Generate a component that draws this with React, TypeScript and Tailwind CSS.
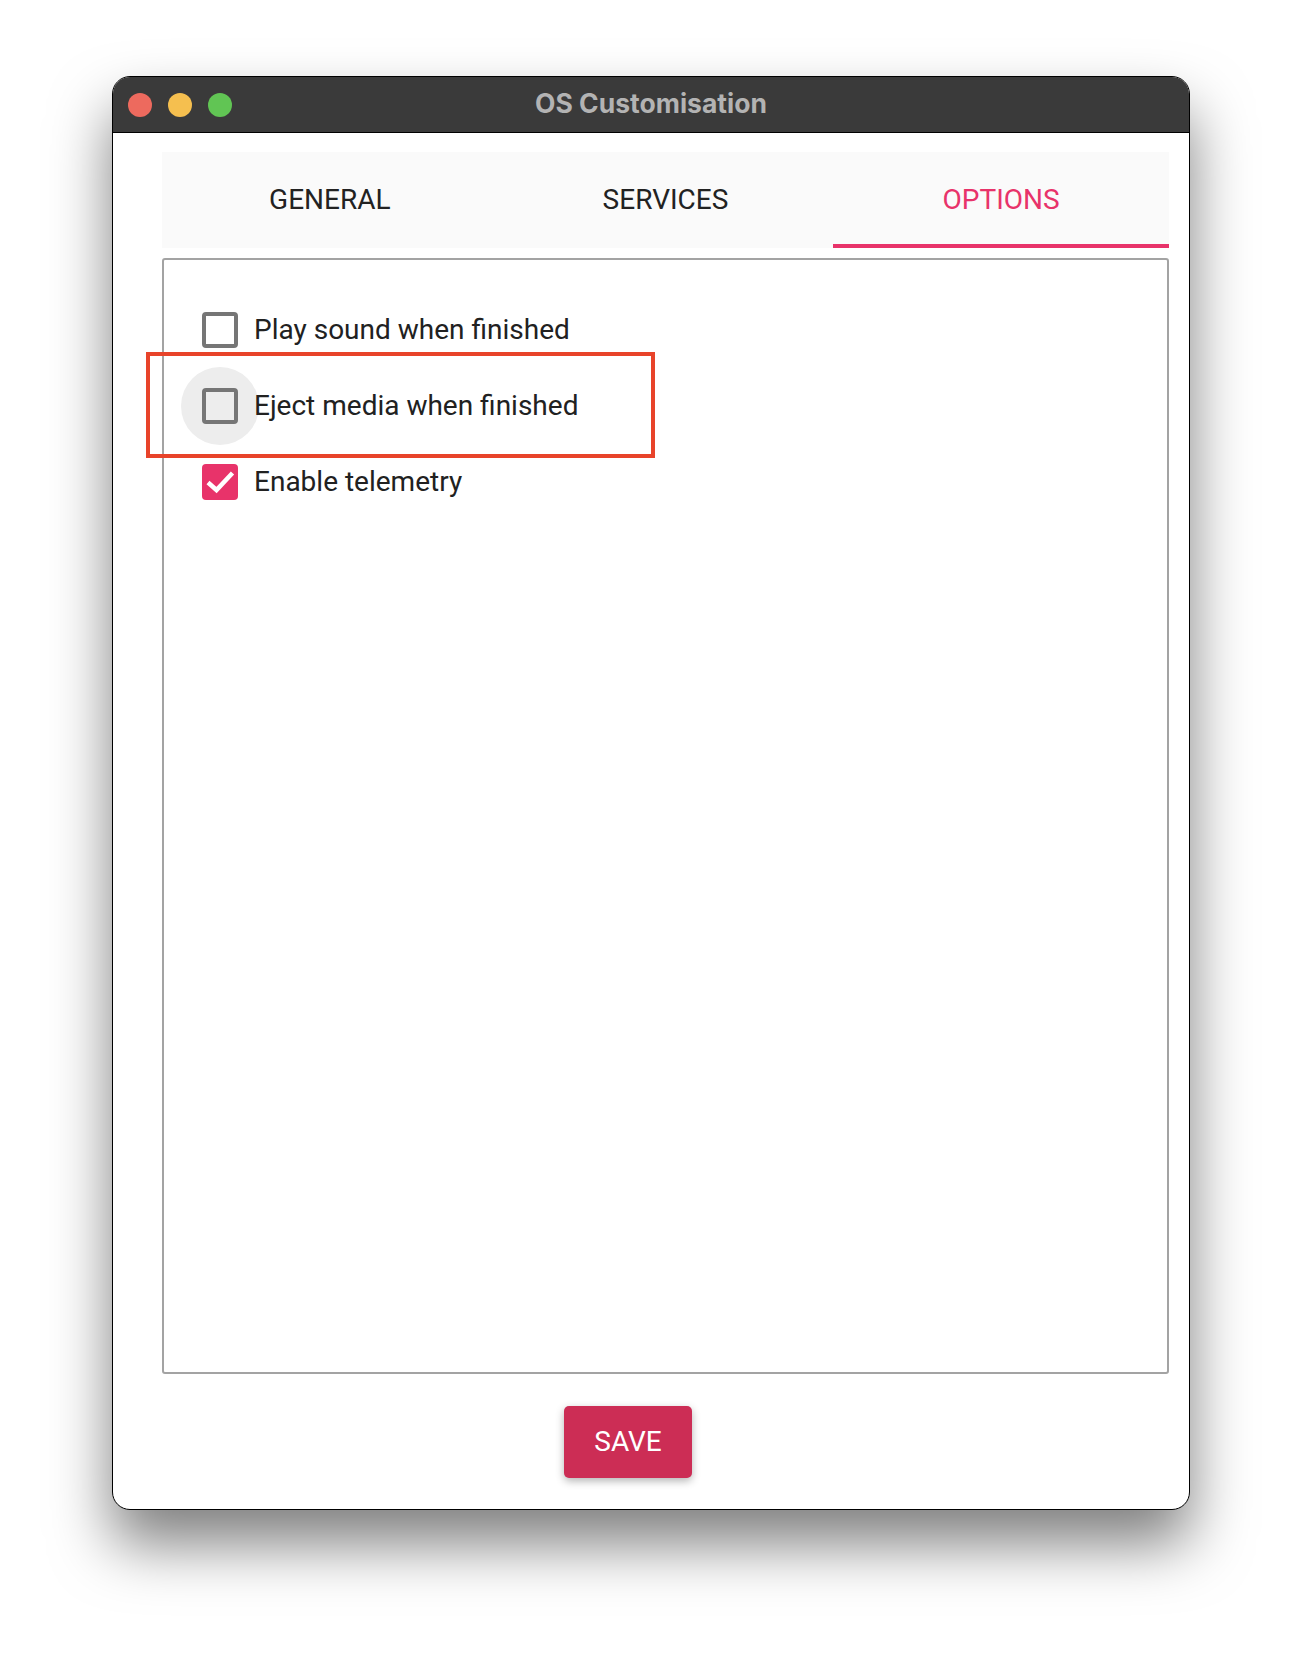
import React from "react";

const tabs = ["GENERAL", "SERVICES", "OPTIONS"];

const options = [
  { label: "Play sound when finished", checked: false, focused: false },
  { label: "Eject media when finished", checked: false, focused: true },
  { label: "Enable telemetry", checked: true, focused: false },
];

const CheckRow = ({ label, checked, focused }: { label: string; checked: boolean; focused: boolean }) => (
  <div className="flex items-center h-[76px] pl-[38px]">
    <div className="relative w-[36px] h-[36px] flex-shrink-0">
      {focused && <div className="absolute -left-[21px] -top-[21px] w-[78px] h-[78px] rounded-full bg-[#ededed]" />}
      {checked ? (
        <div className="relative w-[36px] h-[36px] rounded-[4px] bg-[#e8336a]">
          <svg viewBox="0 0 36 36" className="w-[36px] h-[36px]">
            <path d="M6 18.5 L14.5 26 L30.5 9" fill="none" stroke="white" strokeWidth="4.5" />
          </svg>
        </div>
      ) : (
        <div className="relative w-[36px] h-[36px] rounded-[4px] border-[4px] border-[#767676]" />
      )}
    </div>
    <span className="relative ml-[16px] text-[28px] text-[#212121] font-['Roboto',sans-serif]">{label}</span>
  </div>
);

export default function App() {
  return (
    <div className="relative w-[1302px] h-[1658px] bg-white pt-[76px] pl-[112px] font-['Roboto',sans-serif]">
      <div className="w-[1078px] h-[1434px] rounded-[18px] overflow-hidden border border-black bg-white shadow-[0_34px_60px_rgba(0,0,0,0.5)] flex flex-col">
        <div className="relative h-[56px] bg-[#3a3a3a] border-b border-black flex items-center flex-shrink-0">
          <div className="flex gap-[16px] pl-[15px]">
            <span className="w-[24px] h-[24px] rounded-full bg-[#ed6a5e]" />
            <span className="w-[24px] h-[24px] rounded-full bg-[#f5bf4f]" />
            <span className="w-[24px] h-[24px] rounded-full bg-[#61c554]" />
          </div>
          <div className="absolute inset-0 flex items-center justify-center pb-[2px] text-[26.5px] font-bold text-[#b3b3b3] font-['Inter',sans-serif]">
            OS Customisation
          </div>
        </div>

        <div className="flex-1 flex flex-col pl-[49px] pr-[20px] pt-[19px]">
          <div className="grid grid-cols-3 h-[96px] bg-[#fafafa]">
            {tabs.map((t) => (
              <div
                key={t}
                className={
                  t === "OPTIONS"
                    ? "flex items-center justify-center pt-[4px] text-[28px] text-[#e8336a] border-b-[4px] border-[#e8336a]"
                    : "flex items-center justify-center pt-[4px] text-[28px] text-[#222222] border-b-[4px] border-transparent"
                }
              >
                {t}
              </div>
            ))}
          </div>

          <div className="mt-[10px] h-[1116px] border-2 border-[#a3a3a3] rounded-[3px] pt-[32px]">
            {options.map((o) => (
              <CheckRow key={o.label} {...o} />
            ))}
          </div>

          <div className="pl-[402px] mt-[32px]">
            <button className="w-[128px] h-[72px] rounded-[5px] bg-[#cc2d55] text-white text-[28px] shadow-[0_3px_8px_rgba(0,0,0,0.3)]">
              SAVE
            </button>
          </div>
        </div>
      </div>

      <div className="absolute left-[146px] top-[352px] w-[509px] h-[106px] border-[4px] border-[#e8432a]" />
    </div>
  );
}
